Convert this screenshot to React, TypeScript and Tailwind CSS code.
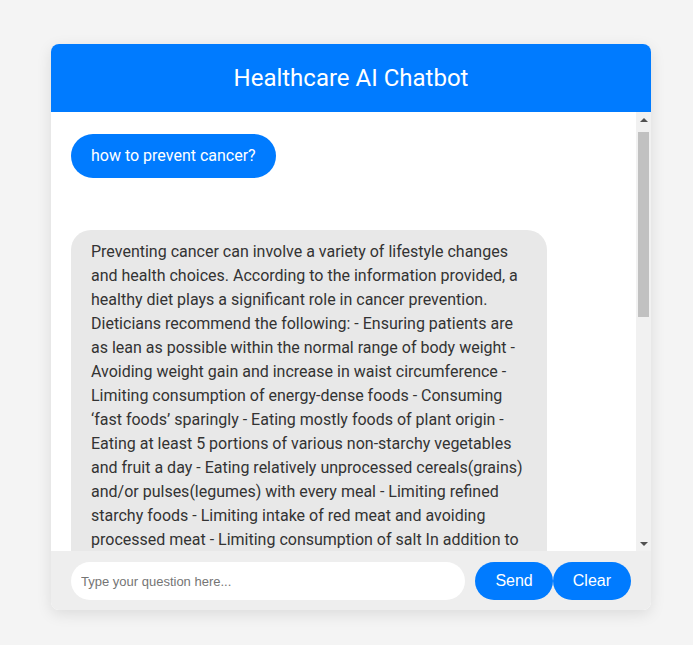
import React from 'react';

const answer =
  'Preventing cancer can involve a variety of lifestyle changes and health choices. According to the information provided, a healthy diet plays a significant role in cancer prevention. Dieticians recommend the following: - Ensuring patients are as lean as possible within the normal range of body weight - Avoiding weight gain and increase in waist circumference - Limiting consumption of energy-dense foods - Consuming \u2018fast foods\u2019 sparingly - Eating mostly foods of plant origin - Eating at least 5 portions of various non-starchy vegetables and fruit a day - Eating relatively unprocessed cereals(grains) and/or pulses(legumes) with every meal - Limiting refined starchy foods - Limiting intake of red meat and avoiding processed meat - Limiting consumption of salt In addition to a healthy diet, other lifestyle factors can also help reduce the risk of cancer. These include avoiding tobacco in all its forms, including cigarettes, cigars and chewing tobacco, as well as limiting exposure to second-hand smoke. Regular physical activity, at least 30 minutes on most days of the week, helps maintain a healthy weight and supports overall health.';

// classic-looking scrollbar drawn next to the message list
const Scrollbar: React.FC = () => (
  <div className="w-[15px] shrink-0 bg-[#f1f1f1] flex flex-col items-center">
    <div className="h-[15px] flex items-center justify-center">
      <div className="w-0 h-0 border-x-[4px] border-x-transparent border-b-[4px] border-b-[#505050]" />
    </div>
    <div className="mt-[5px] w-[11px] h-[185px] bg-[#c1c1c1]" />
    <div className="flex-1" />
    <div className="h-[15px] flex items-center justify-center">
      <div className="w-0 h-0 border-x-[4px] border-x-transparent border-t-[4px] border-t-[#505050]" />
    </div>
  </div>
);

export default function App() {
  return (
    <div className="min-h-[645px] bg-[#f4f4f4] pt-[44px] pl-[51px] font-['Roboto',sans-serif]">
      <div className="w-[600px] rounded-lg bg-white shadow-[0_4px_15px_rgba(0,0,0,0.1)] overflow-hidden">
        <div className="bg-[#007bff] h-[68px] flex items-center justify-center">
          <h1 className="text-white text-[24px] leading-[28px] font-normal">Healthcare AI Chatbot</h1>
        </div>

        <div className="h-[439px] flex">
          <div className="flex-1 overflow-hidden pt-[22px] px-5 flex flex-col items-start">
            <div className="bg-[#007bff] text-white text-base leading-6 px-5 py-[10px] rounded-[22px]">
              how to prevent cancer?
            </div>
            <div className="mt-[52px] w-[476px] shrink-0 bg-[#e8e8e8] text-[#333] text-base leading-6 px-5 py-[10px] rounded-[20px]">
              {answer}
            </div>
          </div>
          <Scrollbar />
        </div>

        <div className="bg-[#eeeeee] flex px-5 pt-[11px] pb-[10px] font-['Liberation_Sans',Arial,sans-serif]">
          <input
            type="text"
            placeholder="Type your question here..."
            className="flex-1 h-[38px] bg-white rounded-full px-[10px] text-[13px] text-[#333] placeholder:text-[#757575] outline-none mr-[10px]"
          />
          <button className="h-[38px] bg-[#007bff] text-white text-base px-5 rounded-full">Send</button>
          <button className="h-[38px] bg-[#007bff] text-white text-base px-5 rounded-full">Clear</button>
        </div>
      </div>
    </div>
  );
}
